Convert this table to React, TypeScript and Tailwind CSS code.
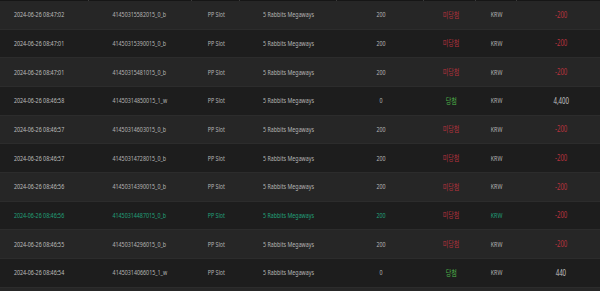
import React from 'react';

type Row = {
  time: string;
  id: string;
  bet: string;
  win: boolean;
  amount: string;
  active?: boolean;
};

const rows: Row[] = [
  { time: '2024-06-26 08:47:02', id: '41450315582015_0_b', bet: '200', win: false, amount: '-200' },
  { time: '2024-06-26 08:47:01', id: '41450315390015_0_b', bet: '200', win: false, amount: '-200' },
  { time: '2024-06-26 08:47:01', id: '41450315481015_0_b', bet: '200', win: false, amount: '-200' },
  { time: '2024-06-26 08:46:58', id: '41450314850015_1_w', bet: '0', win: true, amount: '4,400' },
  { time: '2024-06-26 08:46:57', id: '41450314603015_0_b', bet: '200', win: false, amount: '-200' },
  { time: '2024-06-26 08:46:57', id: '41450314728015_0_b', bet: '200', win: false, amount: '-200' },
  { time: '2024-06-26 08:46:56', id: '41450314390015_0_b', bet: '200', win: false, amount: '-200' },
  { time: '2024-06-26 08:46:56', id: '41450314487015_0_b', bet: '200', win: false, amount: '-200', active: true },
  { time: '2024-06-26 08:46:55', id: '41450314296015_0_b', bet: '200', win: false, amount: '-200' },
  { time: '2024-06-26 08:46:54', id: '41450314066015_1_w', bet: '0', win: true, amount: '440' },
  { time: '', id: '', bet: '', win: false, amount: '' },
];

// the text in the shot is horizontally condensed
const Cell = ({ children, className = '' }: { children: React.ReactNode; className?: string }) => (
  <div className="flex items-center justify-center whitespace-nowrap">
    <span className={`inline-block scale-x-[0.76] ${className}`}>{children}</span>
  </div>
);

export default function App() {
  return (
    <div
      className="w-[600px] h-[291px] overflow-hidden bg-[#1d1d1d] text-[7px] leading-none text-[#b4b4b4]"
      style={{ fontFamily: '"Noto Sans", "Noto Sans CJK KR", sans-serif' }}
    >
      {/* bottom edge of the header */}
      <div className="flex h-px bg-[#161616]">
        <div className="w-[89px] border-r border-[#3a3a3a]" />
        <div className="w-[103px] border-r border-[#3a3a3a]" />
        <div className="w-[48px] border-r border-[#3a3a3a]" />
        <div className="w-[97px] border-r border-[#3a3a3a]" />
        <div className="w-[87px] border-r border-[#3a3a3a]" />
        <div className="w-[52px] border-r border-[#3a3a3a]" />
        <div className="w-[41px] border-r border-[#3a3a3a]" />
        <div className="flex-1" />
      </div>

      {rows.map((r, i) => {
        const base = r.active ? 'text-[#22a07a]' : '';
        return (
          <div
            key={i}
            className={`grid grid-cols-[79px_121px_32px_113px_72px_68px_23px_106px] h-[28.67px] border-b border-[#2c2c2c] ${
              i % 2 === 0 ? 'bg-[#262626]' : 'bg-[#1d1d1d]'
            }`}
          >
            {r.time ? (
              <>
                <Cell className={r.active ? base : 'text-[#bdbdbd]'}>{r.time}</Cell>
                <Cell className={base}>{r.id}</Cell>
                <Cell className={base}>PP Slot</Cell>
                <Cell className={base}>5 Rabbits Megaways</Cell>
                <Cell className={base}>{r.bet}</Cell>
                <Cell className={r.win ? 'text-[#4fb84a] text-[8px]' : 'text-[#b8323d] text-[8px]'}>
                  {r.win ? '당첨' : '미당첨'}
                </Cell>
                <Cell className={base}>KRW</Cell>
                <Cell className={r.win ? 'text-[#c4c4c4] text-[8px]' : 'text-[#b8323d] text-[8px]'}>
                  {r.amount}
                </Cell>
              </>
            ) : null}
          </div>
        );
      })}
    </div>
  );
}
